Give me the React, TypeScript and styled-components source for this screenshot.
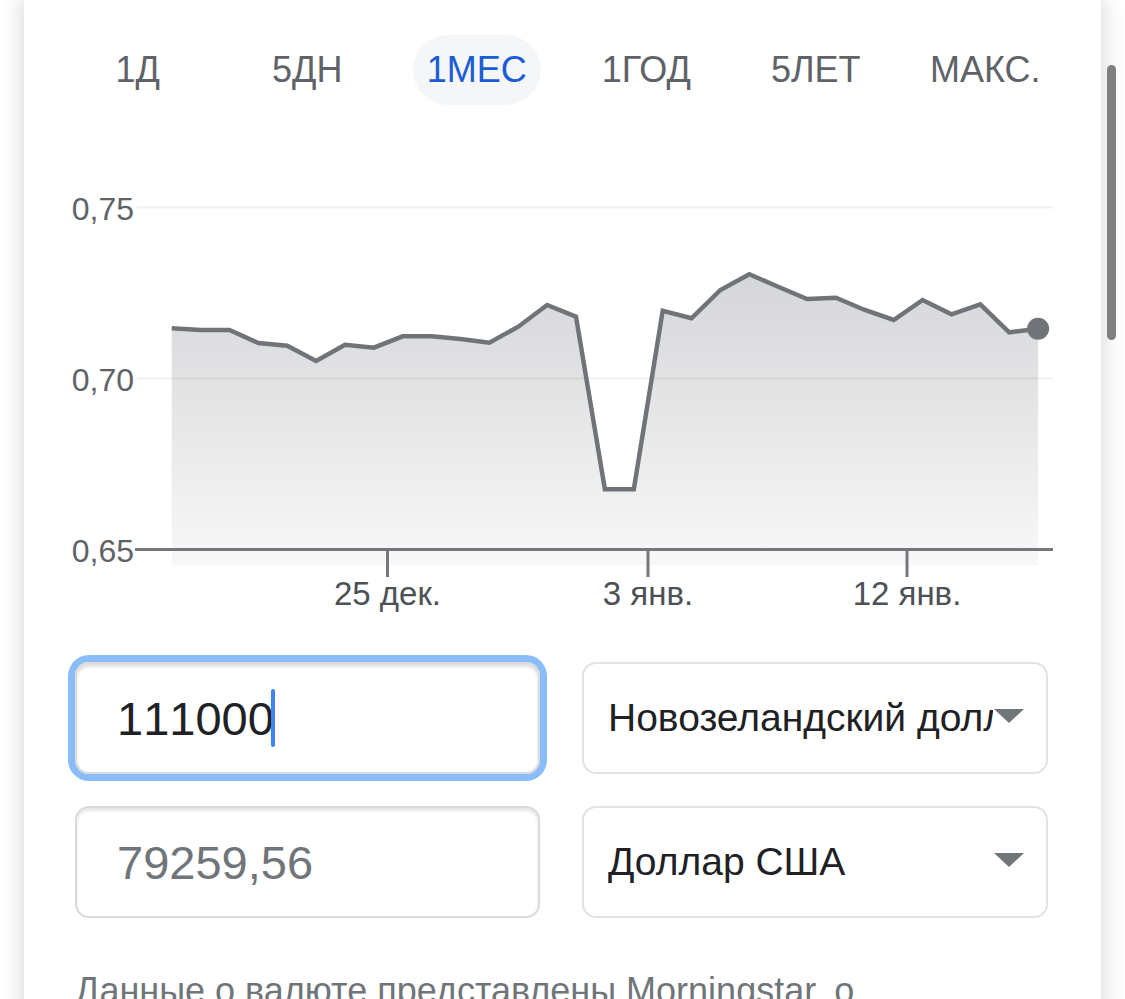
import React from "react";
import styled, { createGlobalStyle } from "styled-components";

const GlobalStyle = createGlobalStyle`
  html, body {
    margin: 0;
    padding: 0;
    background: #ffffff;
  }
  body {
    font-family: "Liberation Sans", Arial, Helvetica, sans-serif;
    overflow: hidden;
  }
  * { box-sizing: border-box; }
`;

const Page = styled.div`
  position: relative;
  width: 1125px;
  height: 999px;
  overflow: hidden;
  background: #ffffff;
`;

const Card = styled.main`
  margin-left: 24px;
  width: 1077px;
  min-height: 1100px;
  background: #ffffff;
  box-shadow: 0 0 20px 3px rgba(0, 0, 0, 0.15);
  display: flex;
  flex-direction: column;
`;

const TabRow = styled.nav`
  display: grid;
  grid-template-columns: repeat(6, 1fr);
  margin: 35px 31px 0 29px;
  height: 70px;
`;

const Tab = styled.div`
  display: flex;
  align-items: center;
  justify-content: center;
`;

const TabLabel = styled.span<{ $active?: boolean }>`
  display: flex;
  align-items: center;
  justify-content: center;
  height: 70px;
  width: ${(p) => (p.$active ? "128px" : "auto")};
  border-radius: 35px;
  background: ${(p) => (p.$active ? "#f5f6f7" : "transparent")};
  color: ${(p) => (p.$active ? "#1a5bd6" : "#5f6368")};
  font-size: 36px;
  white-space: nowrap;
`;

const ChartSvg = styled.svg`
  display: block;
  margin-top: 75px;
  width: 1077px;
  height: 440px;
`;

const FormGrid = styled.section`
  display: grid;
  grid-template-columns: 465px 466px;
  column-gap: 42px;
  row-gap: 32px;
  margin: 42px 0 0 51px;
`;

const Field = styled.div<{ $focused?: boolean }>`
  height: 112px;
  border: 2px solid #dadada;
  border-radius: 14px;
  display: flex;
  align-items: center;
  padding-left: 40px;
  font-size: 47px;
  font-kerning: none;
  color: ${(p) => (p.$focused ? "#202124" : "#70757a")};
  box-shadow: ${(p) =>
    p.$focused
      ? "0 0 0 7px #8abcf9, inset 0 3px 3px rgba(0, 0, 0, 0.12)"
      : "inset 0 3px 3px rgba(0, 0, 0, 0.1)"};
`;

const Caret = styled.span`
  display: inline-block;
  width: 4px;
  height: 58px;
  margin-left: -3px;
  border-radius: 2px;
  background: #3f84f5;
`;

const Select = styled.div`
  height: 112px;
  border: 2px solid #e2e2e2;
  border-radius: 14px;
  display: flex;
  align-items: center;
  padding: 0 22px 0 24px;
`;

const SelectText = styled.span`
  flex: 1;
  min-width: 0;
  overflow: hidden;
  white-space: nowrap;
  font-size: 39px;
  color: #202124;
`;

const Arrow = styled.svg`
  flex: none;
  width: 30px;
  height: 14px;
  margin: 0 0 4px 1px;
`;

const Note = styled.p`
  margin: 48px 0 0 51px;
  font-size: 36px;
  line-height: 1.4;
  color: #70757a;
  white-space: nowrap;
`;

const ScrollThumb = styled.div`
  position: absolute;
  left: 1107px;
  top: 65px;
  width: 9px;
  height: 275px;
  border-radius: 5px;
  background: #7f7f7f;
`;

const tabs = ["1Д", "5ДН", "1МЕС", "1ГОД", "5ЛЕТ", "МАКС."];

const values = [
  328.3, 330, 330, 343, 345.7, 361, 344.7, 347.7, 336.3, 336.3, 339, 342.7,
  326.7, 305, 316.7, 489.3, 489.3, 310.7, 318.3, 290, 274.3, 286.7, 299,
  297.7, 310, 320, 300, 314.3, 304.3, 332.3, 328.7,
];

const X0 = 171.7;
const STEP = 28.88;
const pts = values.map((y, i) => [X0 + i * STEP, y] as const);
const linePath = pts
  .map(([x, y], i) => `${i === 0 ? "M" : "L"}${x.toFixed(1)} ${y}`)
  .join(" ");
const lastX = pts[pts.length - 1][0];
const areaPath = `${linePath} L${lastX.toFixed(1)} 565 L${X0} 565 Z`;

const yLabels = [
  { label: "0,75", y: 207.5 },
  { label: "0,70", y: 378.5 },
  { label: "0,65", y: 549.5 },
];

const xTicks = [
  { label: "25 дек.", x: 387.5 },
  { label: "3 янв.", x: 648 },
  { label: "12 янв.", x: 907 },
];

const FONT = '"Liberation Sans", Arial, sans-serif';

function Chart() {
  return (
    <ChartSvg viewBox="0 0 1077 440">
      <defs>
        <linearGradient id="area" x1="0" y1="274" x2="0" y2="565" gradientUnits="userSpaceOnUse">
          <stop offset="0" stopColor="#d5d6d8" />
          <stop offset="1" stopColor="#f8f8f8" />
        </linearGradient>
      </defs>
      <g transform="translate(-24 -180)">
        <path d={areaPath} fill="url(#area)" />
        <line x1="137" y1="207.5" x2="1053" y2="207.5" stroke="rgba(0,0,0,0.06)" strokeWidth="2" />
        <line x1="137" y1="378.5" x2="1053" y2="378.5" stroke="rgba(0,0,0,0.06)" strokeWidth="2" />
        {yLabels.map((l) => (
          <text
            key={l.label}
            x="134"
            y={l.y + 12}
            textAnchor="end"
            fontFamily={FONT}
            fontSize="32"
            fill="#5f6368"
          >
            {l.label}
          </text>
        ))}
        <line x1="135" y1="549.5" x2="1053" y2="549.5" stroke="#74777b" strokeWidth="3" />
        {xTicks.map((t) => (
          <g key={t.label}>
            <line x1={t.x} y1="549" x2={t.x} y2="577" stroke="#74777b" strokeWidth="3" />
            <text
              x={t.x}
              y="605"
              textAnchor="middle"
              fontFamily={FONT}
              fontSize="33"
              fill="#4d5156"
            >
              {t.label}
            </text>
          </g>
        ))}
        <path
          d={linePath}
          fill="none"
          stroke="#707478"
          strokeWidth="4.5"
          strokeLinejoin="miter"
          strokeMiterlimit="3"
        />
        <circle cx={lastX} cy="328.7" r="11" fill="#707478" />
      </g>
    </ChartSvg>
  );
}

function TriangleIcon() {
  return (
    <Arrow viewBox="0 0 30 14">
      <path d="M0 0 H30 L15 14 Z" fill="#70757a" />
    </Arrow>
  );
}

export default function App() {
  return (
    <>
      <GlobalStyle />
      <Page>
        <Card>
          <TabRow>
            {tabs.map((t) => (
              <Tab key={t}>
                <TabLabel $active={t === "1МЕС"}>{t}</TabLabel>
              </Tab>
            ))}
          </TabRow>
          <Chart />
          <FormGrid>
            <Field $focused>
              111000
              <Caret />
            </Field>
            <Select>
              <SelectText>Новозеландский доллар</SelectText>
              <TriangleIcon />
            </Select>
            <Field>79259,56</Field>
            <Select>
              <SelectText>Доллар США</SelectText>
              <TriangleIcon />
            </Select>
          </FormGrid>
          <Note>Данные о валюте представлены Morningstar, о</Note>
        </Card>
        <ScrollThumb />
      </Page>
    </>
  );
}
